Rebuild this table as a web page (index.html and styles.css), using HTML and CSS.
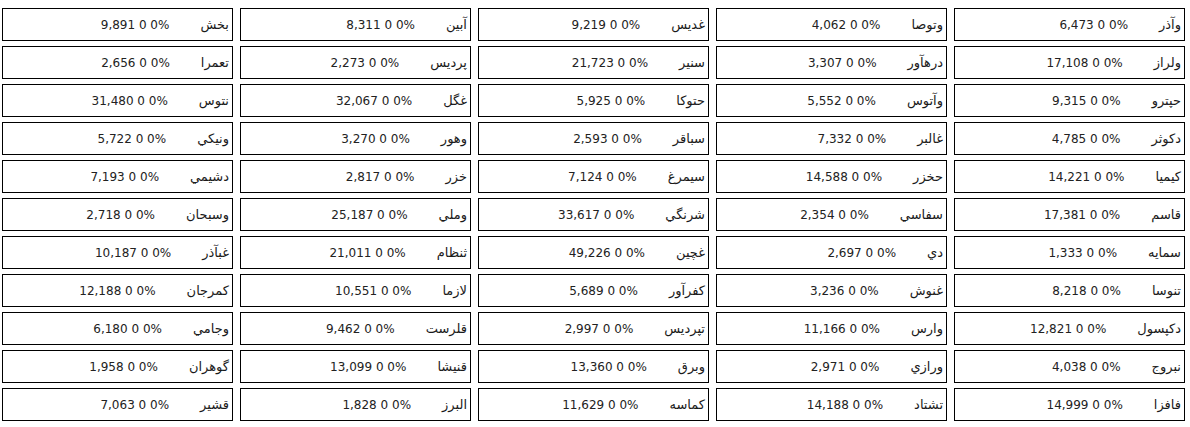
FILE: index.html
```html
<!DOCTYPE html>
<html lang="fa">
<head>
<meta charset="utf-8">
<title>نمادها</title>
<link rel="stylesheet" href="styles.css">
</head>
<body>
<div class="board">
<div class="cell"><span class="nm">وآذر</span><span class="vl">6,473 0 0%</span></div>
<div class="cell"><span class="nm">وتوصا</span><span class="vl">4,062 0 0%</span></div>
<div class="cell"><span class="nm">غديس</span><span class="vl">9,219 0 0%</span></div>
<div class="cell"><span class="nm">آبين</span><span class="vl">8,311 0 0%</span></div>
<div class="cell"><span class="nm">بخش</span><span class="vl">9,891 0 0%</span></div>

<div class="cell"><span class="nm">ولراز</span><span class="vl">17,108 0 0%</span></div>
<div class="cell"><span class="nm">درهآور</span><span class="vl">3,307 0 0%</span></div>
<div class="cell"><span class="nm">سنير</span><span class="vl">21,723 0 0%</span></div>
<div class="cell"><span class="nm">پرديس</span><span class="vl">2,273 0 0%</span></div>
<div class="cell"><span class="nm">تعمرا</span><span class="vl">2,656 0 0%</span></div>

<div class="cell"><span class="nm">حپترو</span><span class="vl">9,315 0 0%</span></div>
<div class="cell"><span class="nm">وآتوس</span><span class="vl">5,552 0 0%</span></div>
<div class="cell"><span class="nm">حتوكا</span><span class="vl">5,925 0 0%</span></div>
<div class="cell"><span class="nm">غگل</span><span class="vl">32,067 0 0%</span></div>
<div class="cell"><span class="nm">نتوس</span><span class="vl">31,480 0 0%</span></div>

<div class="cell"><span class="nm">دكوثر</span><span class="vl">4,785 0 0%</span></div>
<div class="cell"><span class="nm">غالبر</span><span class="vl">7,332 0 0%</span></div>
<div class="cell"><span class="nm">سباقر</span><span class="vl">2,593 0 0%</span></div>
<div class="cell"><span class="nm">وهور</span><span class="vl">3,270 0 0%</span></div>
<div class="cell"><span class="nm">ونيكي</span><span class="vl">5,722 0 0%</span></div>

<div class="cell"><span class="nm">كيميا</span><span class="vl">14,221 0 0%</span></div>
<div class="cell"><span class="nm">حخزر</span><span class="vl">14,588 0 0%</span></div>
<div class="cell"><span class="nm">سيمرغ</span><span class="vl">7,124 0 0%</span></div>
<div class="cell"><span class="nm">خزر</span><span class="vl">2,817 0 0%</span></div>
<div class="cell"><span class="nm">دشيمي</span><span class="vl">7,193 0 0%</span></div>

<div class="cell"><span class="nm">قاسم</span><span class="vl">17,381 0 0%</span></div>
<div class="cell"><span class="nm">سفاسي</span><span class="vl">2,354 0 0%</span></div>
<div class="cell"><span class="nm">شرنگي</span><span class="vl">33,617 0 0%</span></div>
<div class="cell"><span class="nm">وملي</span><span class="vl">25,187 0 0%</span></div>
<div class="cell"><span class="nm">وسبحان</span><span class="vl">2,718 0 0%</span></div>

<div class="cell"><span class="nm">سمايه</span><span class="vl">1,333 0 0%</span></div>
<div class="cell"><span class="nm">دي</span><span class="vl">2,697 0 0%</span></div>
<div class="cell"><span class="nm">غچين</span><span class="vl">49,226 0 0%</span></div>
<div class="cell"><span class="nm">ثنظام</span><span class="vl">21,011 0 0%</span></div>
<div class="cell"><span class="nm">غبآذر</span><span class="vl">10,187 0 0%</span></div>

<div class="cell"><span class="nm">تنوسا</span><span class="vl">8,218 0 0%</span></div>
<div class="cell"><span class="nm">غنوش</span><span class="vl">3,236 0 0%</span></div>
<div class="cell"><span class="nm">كفرآور</span><span class="vl">5,689 0 0%</span></div>
<div class="cell"><span class="nm">لازما</span><span class="vl">10,551 0 0%</span></div>
<div class="cell"><span class="nm">كمرجان</span><span class="vl">12,188 0 0%</span></div>

<div class="cell"><span class="nm">دكپسول</span><span class="vl">12,821 0 0%</span></div>
<div class="cell"><span class="nm">وارس</span><span class="vl">11,166 0 0%</span></div>
<div class="cell"><span class="nm">تپرديس</span><span class="vl">2,997 0 0%</span></div>
<div class="cell"><span class="nm">قلرست</span><span class="vl">9,462 0 0%</span></div>
<div class="cell"><span class="nm">وجامي</span><span class="vl">6,180 0 0%</span></div>

<div class="cell"><span class="nm">نبروج</span><span class="vl">4,038 0 0%</span></div>
<div class="cell"><span class="nm">ورازي</span><span class="vl">2,971 0 0%</span></div>
<div class="cell"><span class="nm">وبرق</span><span class="vl">13,360 0 0%</span></div>
<div class="cell"><span class="nm">قنيشا</span><span class="vl">13,099 0 0%</span></div>
<div class="cell"><span class="nm">گوهران</span><span class="vl">1,958 0 0%</span></div>

<div class="cell"><span class="nm">فافزا</span><span class="vl">14,999 0 0%</span></div>
<div class="cell"><span class="nm">تشتاد</span><span class="vl">14,188 0 0%</span></div>
<div class="cell"><span class="nm">كماسه</span><span class="vl">11,629 0 0%</span></div>
<div class="cell"><span class="nm">البرز</span><span class="vl">1,828 0 0%</span></div>
<div class="cell"><span class="nm">قشير</span><span class="vl">7,063 0 0%</span></div>
</div>
</body>
</html>
```

FILE: styles.css
```css
html, body {
  background: #ffffff;
}

body {
  margin: 0;
  padding: 8px 5px 0 2px;
  font-family: "DejaVu Sans", "Noto Sans", sans-serif;
  font-size: 12px;
  color: #1e1e1e;
}

.board {
  direction: rtl;
  display: grid;
  grid-template-columns: repeat(5, 1fr);
  grid-auto-rows: 33px;
  column-gap: 7px;
  row-gap: 5px;
}

.cell {
  box-sizing: border-box;
  border: 1px solid #000000;
  background: #ffffff;
  display: flex;
  align-items: center;
  padding-right: 3px;
  white-space: nowrap;
  overflow: hidden;
}

.nm {
  font-size: 13px;
  color: #1a1a1a;
}

.vl {
  direction: ltr;
  unicode-bidi: isolate;
  margin-right: 31px;
  color: #222222;
}
```
